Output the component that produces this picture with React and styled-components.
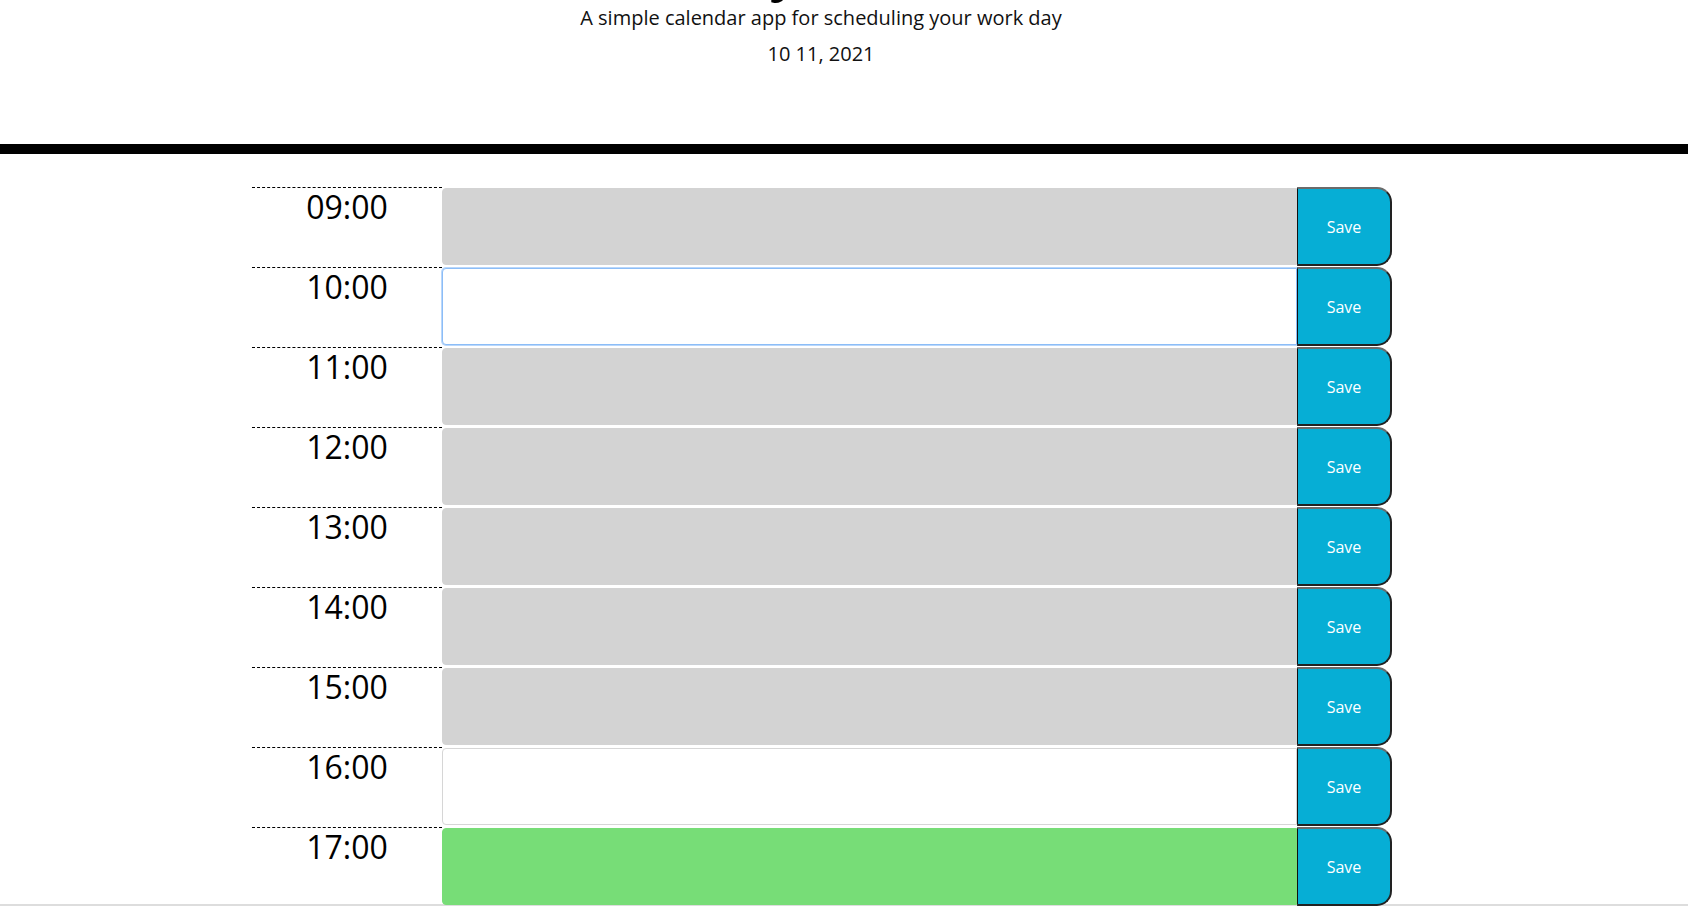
import React from "react";
import styled, { createGlobalStyle } from "styled-components";

const GlobalStyle = createGlobalStyle`
    * {
        box-sizing: border-box;
    }
    html,
    body {
        margin: 0;
        overflow: hidden;
        background: #ffffff;
        font-family: "Open Sans", "Liberation Sans", sans-serif;
        color: #000000;
    }
`;

const hours = [
    { label: "09:00", state: "past" },
    { label: "10:00", state: "focused" },
    { label: "11:00", state: "past" },
    { label: "12:00", state: "past" },
    { label: "13:00", state: "past" },
    { label: "14:00", state: "past" },
    { label: "15:00", state: "past" },
    { label: "16:00", state: "blank" },
    { label: "17:00", state: "future" },
];

const App = () => {
    return (
        <>
            <GlobalStyle />
            <Jumbotron>
                <Title>Work Day Scheduler</Title>
                <Lead>A simple calendar app for scheduling your work day</Lead>
                <CurrentDay>10 11, 2021</CurrentDay>
            </Jumbotron>
            <Container>
                {hours.map((item) => (
                    <TimeBlock key={item.label}>
                        <Hour>{item.label}</Hour>
                        <Description state={item.state} />
                        <SaveBtn>Save</SaveBtn>
                    </TimeBlock>
                ))}
            </Container>
            <Rule />
        </>
    );
};

export default App;

const Jumbotron = styled.header`
    text-align: center;
    padding: 0 46px 75px 0;
    border-bottom: 10px solid #000000;
    margin-bottom: 33px;
`;

const Title = styled.h1`
    font-size: 72px;
    font-weight: 300;
    line-height: 1.2;
    margin: -85px 0 2px;
    color: #000000;
`;

const Lead = styled.p`
    font-size: 20px;
    line-height: 30px;
    margin: 0;
    color: #111111;
`;

const CurrentDay = styled.p`
    font-size: 20px;
    line-height: 30px;
    margin: 6px 0 0;
    color: #111111;
`;

const Container = styled.main`
    width: 1140px;
    margin-left: 252px;
    display: flex;
    flex-direction: column;
`;

const TimeBlock = styled.div`
    display: flex;
    align-items: flex-start;
    height: 80px;
`;

const Hour = styled.div`
    width: 190px;
    height: 80px;
    flex: none;
    border-top: 1px dashed #000000;
    text-align: center;
    font-size: 32px;
    line-height: 1.2;
    padding-top: 0;
    color: #000000;
`;

const stateColors = {
    past: "#d3d3d3",
    focused: "#ffffff",
    blank: "#ffffff",
    future: "#77dd77",
};

const stateBorders = {
    past: "#d3d3d3",
    focused: "#8cbdf7",
    blank: "#d6d6d6",
    future: "#77dd77",
};

const Description = styled.textarea`
    flex: 1;
    height: 77px;
    margin-top: 1px;
    resize: none;
    padding: 10px;
    font-family: inherit;
    background-color: ${(p) => stateColors[p.state]};
    border: 1px solid ${(p) => stateBorders[p.state]};
    border-radius: 4px 0 0 4px;
    box-shadow: ${(p) => (p.state === "focused" ? "0 0 0 1px #b9d7fb" : "none")};
    outline: none;
`;

const SaveBtn = styled.button`
    width: 95px;
    height: 79px;
    flex: none;
    background-color: #06aed5;
    color: #ffffff;
    font-family: inherit;
    font-size: 16px;
    border-top: 2px solid #6b6b6b;
    border-right: 2px solid #222222;
    border-bottom: 2px solid #222222;
    border-left: 1px solid #111111;
    border-top-right-radius: 15px;
    border-bottom-right-radius: 15px;
    padding: 0;
    cursor: pointer;
`;

const Rule = styled.div`
    height: 2px;
    margin-top: -3px;
    background: #dddddd;
`;
